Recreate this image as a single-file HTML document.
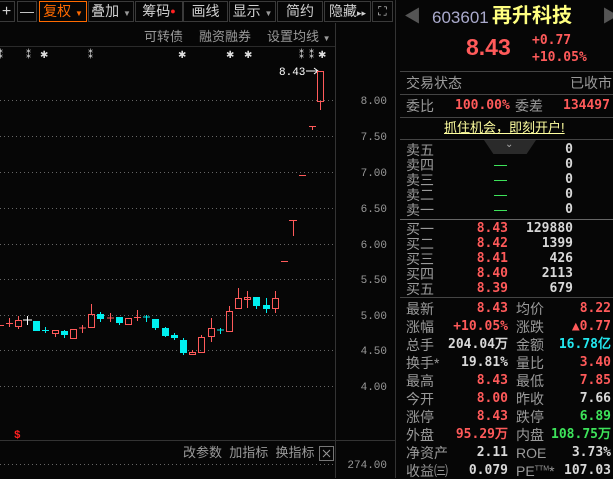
<!DOCTYPE html>
<html><head><meta charset="utf-8"><style>
*{margin:0;padding:0;box-sizing:border-box}
body{width:613px;height:478px;background:#060606;overflow:hidden;position:relative;font-family:"Liberation Sans","Noto Sans CJK SC",sans-serif;color:#c8c8c8}
.a{position:absolute;white-space:nowrap;line-height:1}
.t{font-size:14px}
.r{color:#ff5a5a}.g{color:#3de35a}.c{color:#23e8f0}.w{color:#d8d8d8}.gr{color:#9a9a9a}
.btn{position:absolute;top:1px;height:21px;border:1px solid #3a3a3a;font-size:14px;color:#d0d0d0;text-align:center;line-height:19px}
.m{font-family:"DejaVu Sans Mono","Liberation Mono",monospace}
.R{text-align:right}
</style></head><body>
<div class="btn" style="left:-2px;width:17px;font-size:16px">+</div>
<div class="btn" style="left:17px;width:20px">—</div>
<div class="btn" style="left:39px;width:48px;border-color:#ff6a00;color:#ff6a00">复权 <span style="font-size:8px">▼</span></div>
<div class="btn" style="left:88px;width:46px">叠加 <span style="font-size:8px;color:#999">▼</span></div>
<div class="btn" style="left:135px;width:48px">筹码<span style="color:#ff2020;font-size:9px;vertical-align:top">●</span></div>
<div class="btn" style="left:183px;width:45px">画线</div>
<div class="btn" style="left:229px;width:47px">显示 <span style="font-size:8px;color:#999">▼</span></div>
<div class="btn" style="left:277px;width:46px">简约</div>
<div class="btn" style="left:324px;width:47px">隐藏<span style="font-size:9px">▸▸</span></div>
<div class="btn" style="left:372px;width:21px;font-size:12px">⛶</div>
<div class="a gr" style="left:144px;top:30px;font-size:13px">可转债</div>
<div class="a gr" style="left:199px;top:30px;font-size:13px">融资融券</div>
<div class="a gr" style="left:267px;top:30px;font-size:13px">设置均线 <span style="font-size:8px">▼</span></div>
<div style="position:absolute;left:0;top:46px;width:335px;height:1px;background:#2a2a2a"></div>
<svg style="position:absolute;left:0;top:0" width="400" height="478">
<g stroke="#666" stroke-dasharray="1 3" stroke-width="1">
<line x1="0" y1="100.5" x2="335" y2="100.5"/><line x1="0" y1="136.5" x2="335" y2="136.5"/><line x1="0" y1="172.5" x2="335" y2="172.5"/><line x1="0" y1="208.5" x2="335" y2="208.5"/><line x1="0" y1="244.5" x2="335" y2="244.5"/><line x1="0" y1="279.5" x2="335" y2="279.5"/><line x1="0" y1="315.5" x2="335" y2="315.5"/><line x1="0" y1="350.5" x2="335" y2="350.5"/><line x1="0" y1="386.5" x2="335" y2="386.5"/><line x1="0" y1="464.5" x2="335" y2="464.5"/>
</g>
<line x1="335.5" y1="23" x2="335.5" y2="478" stroke="#333"/>
<line x1="395.5" y1="0" x2="395.5" y2="478" stroke="#333"/>
<line x1="0" y1="440.5" x2="395" y2="440.5" stroke="#333"/>
<g fill="#ddd" font-size="10" font-family="Liberation Mono">
<text x="-2" y="58">⁑</text><text x="26" y="58">⁑</text><text x="40" y="58">✱</text><text x="88" y="58">⁑</text><text x="178" y="58">✱</text><text x="226" y="58">✱</text><text x="244" y="58">✱</text><text x="299" y="58">⁑</text><text x="309" y="58">⁑</text><text x="318" y="58">✱</text>
</g>
<text x="279" y="75" fill="#fff" font-size="11" font-family="Liberation Mono">8.43</text>
<path d="M306 71H318M314 68L318 71L314 74" stroke="#fff" fill="none"/>
<g stroke="#ff5a5a" fill="none" stroke-width="1">
<line x1="0" y1="325.5" x2="4" y2="325.5"/>
<path d="M6 323.5H13M9.5 318V327"/>
<rect x="15.5" y="320.5" width="6" height="6"/><line x1="18.5" y1="316" x2="18.5" y2="320"/><line x1="18.5" y1="327" x2="18.5" y2="329"/>
<rect x="52.5" y="330.5" width="6" height="3"/><line x1="55.5" y1="334" x2="55.5" y2="337"/>
<rect x="70.5" y="329.5" width="6" height="9"/>
<path d="M79 328H86M82.5 325V333"/>
<rect x="88.5" y="314.5" width="6" height="13"/><line x1="91.5" y1="304" x2="91.5" y2="314"/>
<path d="M107 318H114M110.5 313V322"/>
<rect x="125.5" y="318.5" width="6" height="6"/>
<path d="M134 317.5H141M137.5 310V321"/>
<rect x="189.5" y="352.5" width="6" height="2"/><line x1="192.5" y1="350" x2="192.5" y2="352"/>
<rect x="198.5" y="337.5" width="6" height="15"/><line x1="201.5" y1="335" x2="201.5" y2="337"/>
<rect x="208.5" y="328.5" width="6" height="8"/><line x1="211.5" y1="318" x2="211.5" y2="328"/><line x1="211.5" y1="337" x2="211.5" y2="342"/>
<rect x="226.5" y="311.5" width="6" height="20"/><line x1="229.5" y1="306" x2="229.5" y2="311"/>
<rect x="235.5" y="298.5" width="6" height="10"/><line x1="238.5" y1="288" x2="238.5" y2="298"/>
<rect x="244.5" y="297.5" width="6" height="2"/><line x1="247.5" y1="291" x2="247.5" y2="308"/>
<rect x="272.5" y="298.5" width="6" height="10"/><line x1="275.5" y1="291" x2="275.5" y2="298"/><line x1="275.5" y1="309" x2="275.5" y2="313"/>
<line x1="281" y1="261.5" x2="288" y2="261.5"/>
<path d="M289 220.5H297M293.5 220V236"/>
<line x1="299" y1="175.5" x2="306" y2="175.5"/>
<path d="M309 126.5H316M312.5 126V130"/>
<rect x="317.5" y="71.5" width="6" height="30"/><line x1="320.5" y1="102" x2="320.5" y2="110"/>
</g>
<g fill="#00f0f0" stroke="#00f0f0">
<rect x="33.5" y="321.5" width="6" height="9"/>
<path d="M42 330.5H49M45.5 327V333" fill="none"/>
<rect x="61.5" y="331.5" width="6" height="3"/><line x1="64.5" y1="330" x2="64.5" y2="338"/>
<rect x="97.5" y="314.5" width="6" height="4"/><line x1="100.5" y1="312" x2="100.5" y2="322"/>
<rect x="116.5" y="317.5" width="6" height="5"/><line x1="119.5" y1="323" x2="119.5" y2="325"/>
<path d="M143 317H150M146.5 315V322" fill="none"/>
<rect x="152.5" y="319.5" width="6" height="8"/><line x1="155.5" y1="328" x2="155.5" y2="330"/>
<rect x="162.5" y="328.5" width="6" height="7"/><line x1="165.5" y1="327" x2="165.5" y2="337"/>
<rect x="171.5" y="335.5" width="6" height="2"/><line x1="174.5" y1="333" x2="174.5" y2="340"/>
<rect x="180.5" y="340.5" width="6" height="12"/><line x1="183.5" y1="338" x2="183.5" y2="355"/>
<path d="M217 330H224M220.5 328V334" fill="none"/>
<rect x="253.5" y="297.5" width="6" height="8"/><line x1="256.5" y1="306" x2="256.5" y2="309"/>
<rect x="263.5" y="305.5" width="6" height="3"/><line x1="266.5" y1="298" x2="266.5" y2="313"/>
</g>
<path d="M23 320H32M27.5 316V325" stroke="#fff"/>
<text x="14" y="438" fill="#ff2020" font-size="11" font-weight="bold" font-family="Liberation Mono">$</text>
<g fill="#999" font-size="11" font-family="Liberation Mono" text-anchor="end">
<text x="387" y="104">8.00</text><text x="387" y="140">7.50</text><text x="387" y="176">7.00</text><text x="387" y="212">6.50</text><text x="387" y="248">6.00</text><text x="387" y="283">5.50</text><text x="387" y="319">5.00</text><text x="387" y="354">4.50</text><text x="387" y="390">4.00</text><text x="387" y="468">274.00</text>
</g>
<rect x="319.5" y="446.5" width="14" height="14" fill="none" stroke="#777"/>
<path d="M323 450L330 457M330 450L323 457" stroke="#999"/>
</svg>
<div class="a gr" style="left:183px;top:446px;font-size:13px">改参数 &nbsp;加指标 &nbsp;换指标</div>
<div class="a" style="left:404px;top:8px;font-size:17px;color:#555">◀</div>
<div class="a" style="left:602px;top:8px;font-size:17px;color:#555">▶</div>
<div class="a" style="left:432px;top:9px;font-size:17px;color:#aac">603601</div>
<div class="a" style="left:492px;top:6px;font-size:20px;color:#ffff80;font-weight:bold">再升科技</div>
<div class="a r" style="left:466px;top:36px;font-size:23px;font-weight:bold">8.43</div>
<div class="a r m" style="left:532px;top:34px;font-size:13px;font-weight:bold">+0.77</div>
<div class="a r m" style="left:532px;top:51px;font-size:13px;font-weight:bold">+10.05%</div>
<div style="position:absolute;left:400px;width:213px;top:71px;height:1px;background:#444"></div>
<div style="position:absolute;left:400px;width:213px;top:94px;height:1px;background:#444"></div>
<div style="position:absolute;left:400px;width:213px;top:117px;height:1px;background:#444"></div>
<div style="position:absolute;left:400px;width:213px;top:139px;height:1px;background:#444"></div>
<div style="position:absolute;left:400px;width:213px;top:219px;height:1px;background:#666"></div>
<div style="position:absolute;left:400px;width:213px;top:297px;height:1px;background:#444"></div>
<div class="a t gr" style="left:406px;top:76px">交易状态</div>
<div class="a t gr" style="left:570px;top:76px">已收市</div>
<div class="a t gr" style="left:406px;top:99px">委比</div>
<div class="a r m" style="left:455px;top:99px;font-size:13px;font-weight:bold">100.00%</div>
<div class="a t gr" style="left:515px;top:99px">委差</div>
<div class="a r m" style="left:563px;top:99px;font-size:13px;font-weight:bold">134497</div>
<div class="a" style="left:444px;top:121px;font-size:13px;color:#ffffa0;text-decoration:underline">抓住机会，即刻开户!</div>
<div style="position:absolute;left:484px;top:140px;width:52px;height:14px;background:#2a2a2a;clip-path:polygon(0 0,100% 0,82% 100%,18% 100%)"></div>
<div class="a" style="left:505px;top:140px;font-size:10px;color:#aaa">⌄</div>
<div id="ob"></div>
<script>
var h='';
var s=['卖五','卖四','卖三','卖二','卖一'];
for(var i=0;i<5;i++){var y=143+i*15;h+='<div class="a t gr" style="left:406px;top:'+y+'px">'+s[i]+'</div><div class="a w m R" style="left:540px;width:33px;top:'+y+'px;font-size:13px;font-weight:bold">0</div>';if(i>0)h+='<div style="position:absolute;left:494px;top:'+(y+7)+'px;width:13px;height:1px;background:#3de35a"></div>';}
var b=[['买一','8.43','129880'],['买二','8.42','1399'],['买三','8.41','426'],['买四','8.40','2113'],['买五','8.39','679']];
for(var i=0;i<5;i++){var y=222+i*15;h+='<div class="a t gr" style="left:406px;top:'+y+'px">'+b[i][0]+'</div><div class="a r m R" style="left:460px;width:48px;top:'+y+'px;font-size:13px;font-weight:bold">'+b[i][1]+'</div><div class="a w m R" style="left:513px;width:60px;top:'+y+'px;font-size:13px;font-weight:bold">'+b[i][2]+'</div>';}
var q=[['最新','8.43','r','均价','8.22','r'],['涨幅','+10.05%','r','涨跌','▲0.77','r'],['总手','204.04万','w','金额','16.78亿','c'],['换手*','19.81%','w','量比','3.40','r'],['最高','8.43','r','最低','7.85','r'],['今开','8.00','r','昨收','7.66','w'],['涨停','8.43','r','跌停','6.89','g'],['外盘','95.29万','r','内盘','108.75万','g'],['净资产','2.11','w','ROE','3.73%','w'],['收益㈢','0.079','w','PE<sup style="font-size:7px">TTM</sup>*','107.03','w']];
for(var i=0;i<10;i++){var y=302+i*18,r=q[i];h+='<div class="a t gr" style="left:406px;top:'+y+'px">'+r[0]+'</div><div class="a '+r[2]+' m R" style="left:440px;width:68px;top:'+y+'px;font-size:13px;font-weight:bold">'+r[1]+'</div><div class="a t gr" style="left:516px;top:'+y+'px">'+r[3]+'</div><div class="a '+r[5]+' m R" style="left:540px;width:71px;top:'+y+'px;font-size:13px;font-weight:bold">'+r[4]+'</div>';}
document.getElementById('ob').innerHTML=h;
</script>
</body></html>
